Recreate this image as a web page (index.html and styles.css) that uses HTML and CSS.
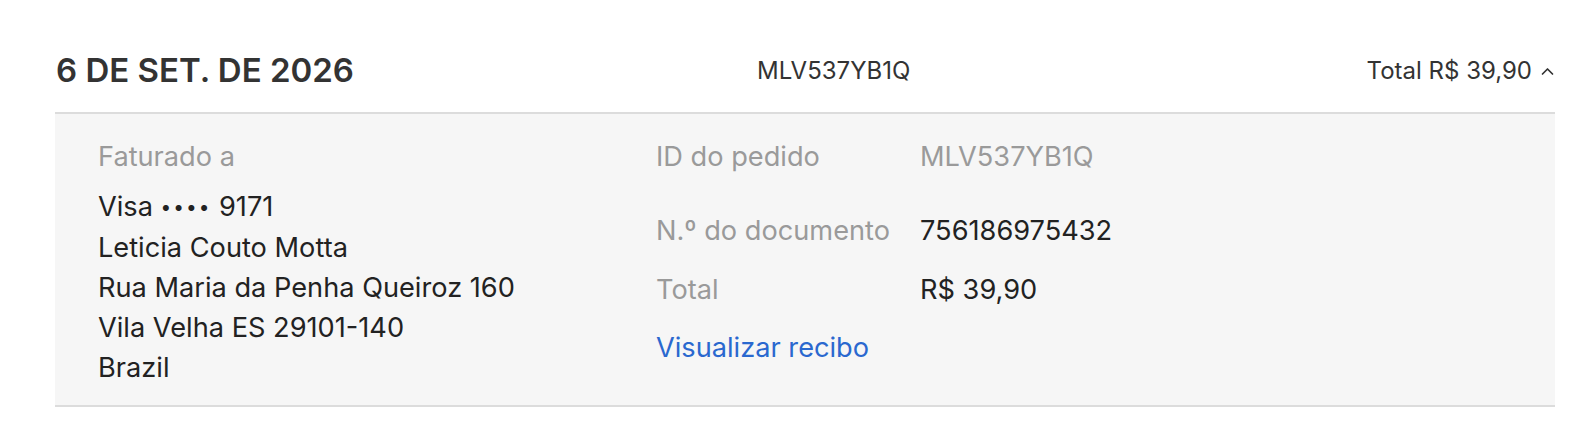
FILE: index.html
```html
<!DOCTYPE html>
<html lang="pt-BR">
<head>
    <meta charset="UTF-8">
    <meta name="viewport" content="width=device-width, initial-scale=1.0">
    <title>Histórico de compras</title>
    <link rel="stylesheet" href="styles.css">
</head>
<body>
    <div class="purchase">
        <div class="purchase-header">
            <h2 class="purchase-date">6 DE SET. DE 2026</h2>
            <div class="purchase-id">MLV537YB1Q</div>
            <button class="purchase-toggle">
                Total R$ 39,90
                <svg class="chevron" width="13" height="9" viewBox="0 0 13 9">
                    <path d="M1.5 7 L6.5 2 L11.5 7" fill="none" stroke="#333" stroke-width="1.7" stroke-linecap="round" stroke-linejoin="round"/>
                </svg>
            </button>
        </div>

        <div class="purchase-details">
            <div class="billing">
                <div class="label">Faturado a</div>
                <div class="billing-lines">
                    <div>Visa <span class="dots">••••</span> 9171</div>
                    <div>Leticia Couto Motta</div>
                    <div>Rua Maria da Penha Queiroz 160</div>
                    <div>Vila Velha ES 29101-140</div>
                    <div>Brazil</div>
                </div>
            </div>

            <div class="order-info">
                <div class="info-row row-id">
                    <span class="label">ID do pedido</span>
                    <span class="value muted">MLV537YB1Q</span>
                </div>
                <div class="info-row row-doc">
                    <span class="label">N.º do documento</span>
                    <span class="value">756186975432</span>
                </div>
                <div class="info-row row-total">
                    <span class="label">Total</span>
                    <span class="value">R$ 39,90</span>
                </div>
                <a class="receipt-link" href="#">Visualizar recibo</a>
            </div>
        </div>
    </div>
</body>
</html>
```

FILE: styles.css
```css
body {
    margin: 0;
    background: #fff;
    font-family: 'Inter', 'Liberation Sans', sans-serif;
    color: #333;
}

.purchase {
    margin: 28px 31px 0 55px;
}

.purchase-header {
    display: flex;
    align-items: center;
    height: 84px;
    border-bottom: 2px solid #dcdcdc;
}

.purchase-date {
    margin: 0;
    width: 520px;
    padding-left: 1px;
    font-size: 33px;
    font-weight: 600;
    color: #333;
}

.purchase-id {
    flex: 1;
    padding-left: 181px;
    font-size: 24px;
    color: #333;
}

.purchase-toggle {
    display: flex;
    align-items: center;
    gap: 9px;
    background: none;
    border: none;
    padding: 0 1px 0 0;
    font-family: inherit;
    font-size: 24px;
    color: #333;
    cursor: pointer;
}

.chevron {
    margin-top: 2px;
}

.purchase-details {
    display: flex;
    background: #f6f6f6;
    border-bottom: 2px solid #dcdcdc;
    padding: 23px 0 17px 43px;
    font-size: 27.2px;
    line-height: 40px;
}

.billing {
    width: 558px;
    color: #222;
}

.billing-lines {
    margin-top: 10px;
}

.dots {
    font-size: 19px;
    letter-spacing: 2px;
    vertical-align: 2px;
}

.label {
    color: #9a9a9a;
}

.order-info {
    display: flex;
    flex-direction: column;
    align-items: flex-start;
}

.info-row {
    display: flex;
}

.info-row .label {
    width: 264px;
}

.info-row .value {
    color: #222;
}

.info-row .value.muted {
    color: #9a9a9a;
}

.row-doc {
    margin-top: 34px;
}

.row-total {
    margin-top: 19px;
}

.receipt-link {
    margin-top: 18px;
    color: #2a68cf;
    text-decoration: none;
}
```
